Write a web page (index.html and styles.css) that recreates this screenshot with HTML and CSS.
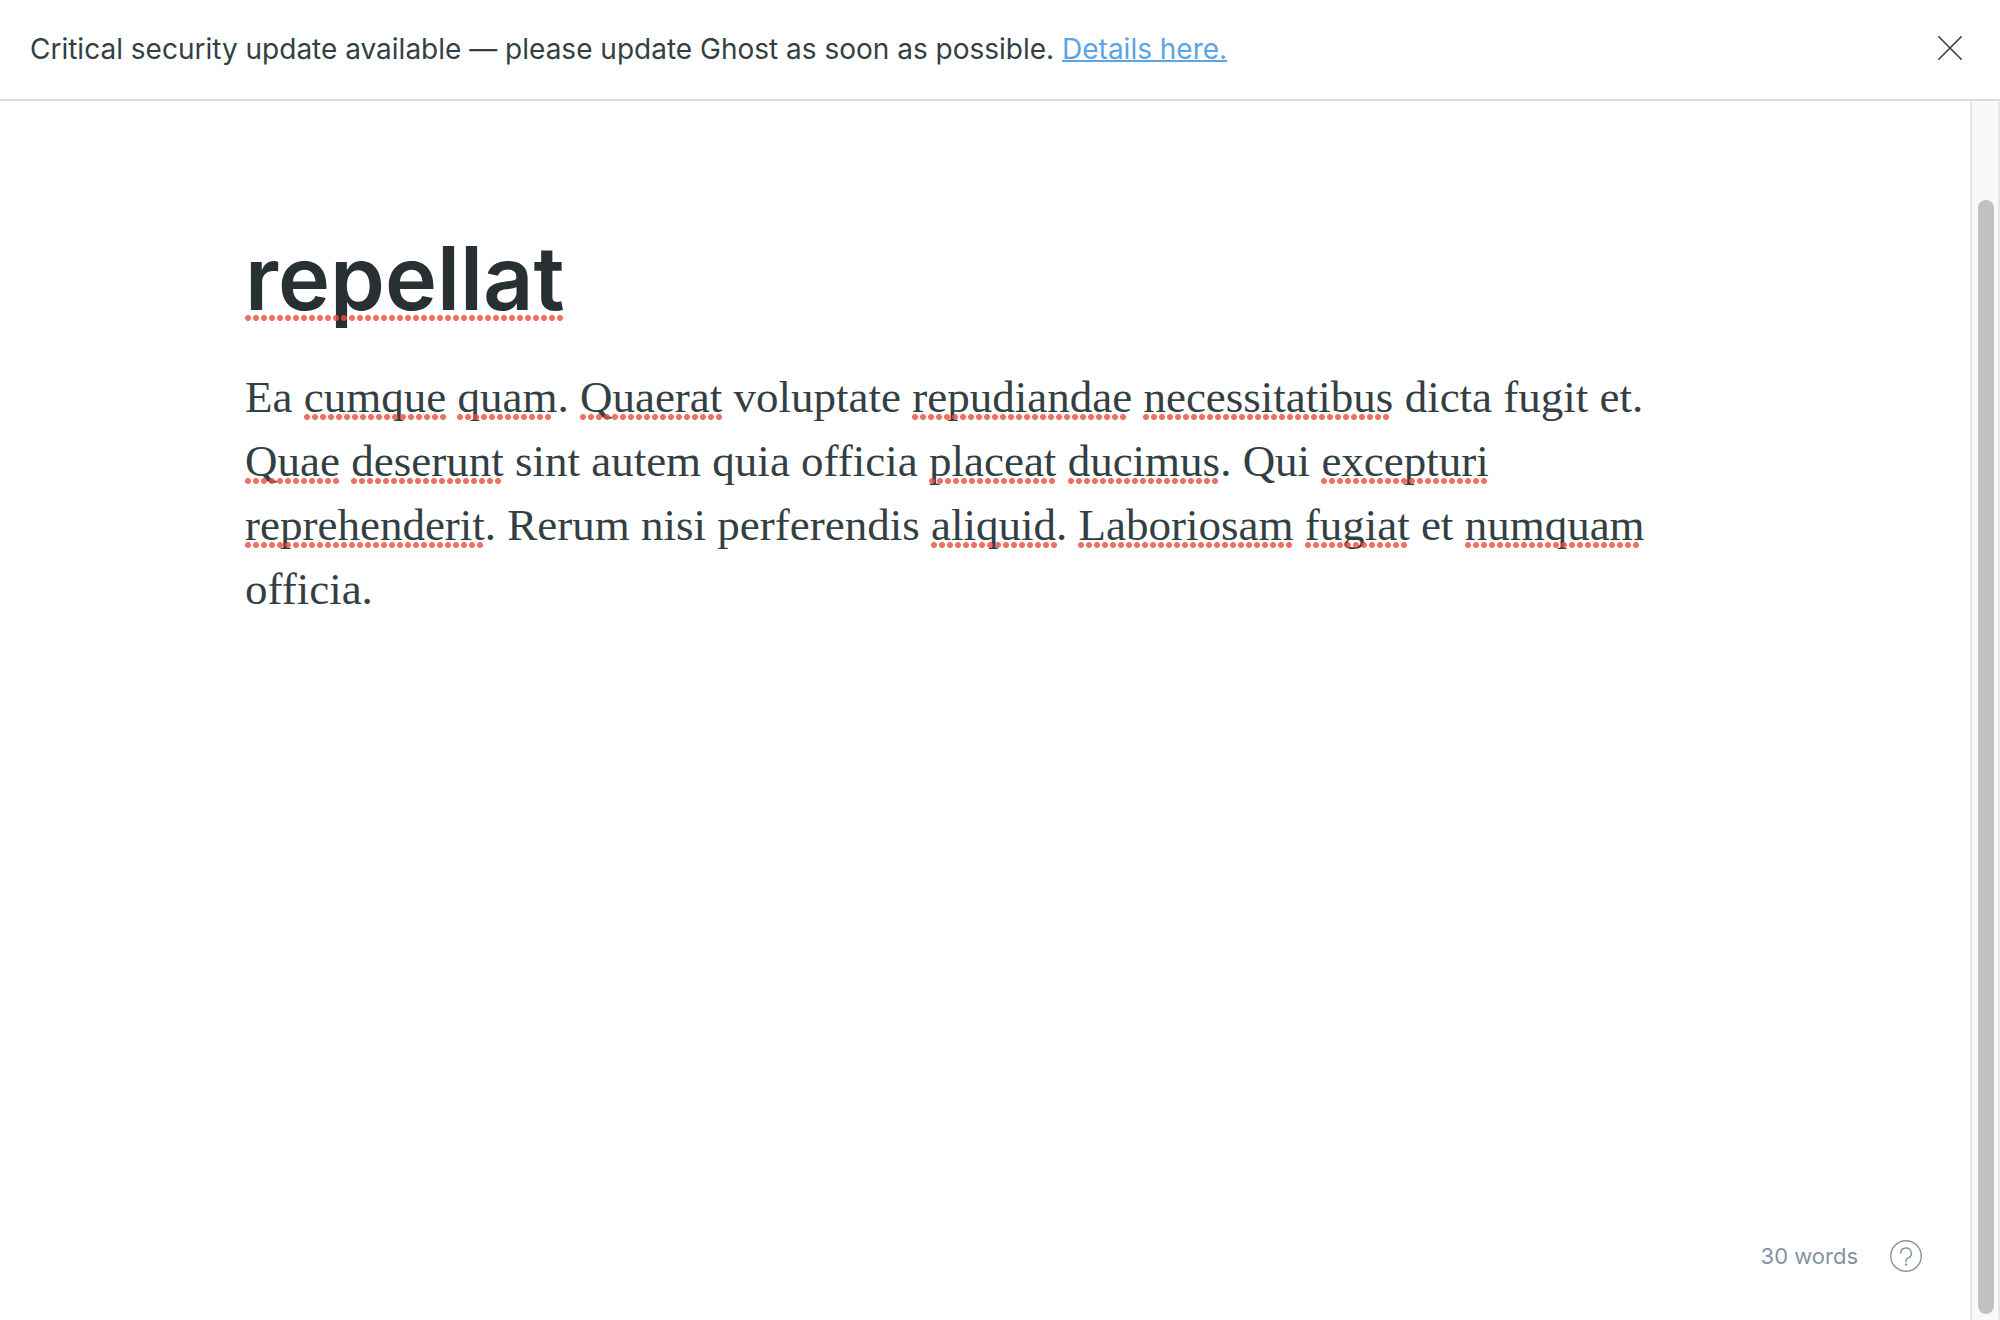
FILE: index.html
```html
<!DOCTYPE html>
<html lang="en">
<head>
<meta charset="utf-8">
<title>repellat - Ghost</title>
<link rel="stylesheet" href="styles.css">
</head>
<body>
<div class="app">
  <aside class="alert">
    <p class="alert-text">Critical security update available — please update Ghost as soon as possible. <a class="alert-link" href="#details">Details here.</a></p>
    <button class="alert-close" type="button" aria-label="Close">
      <svg width="24" height="24" viewBox="0 0 24 24" fill="none" stroke="currentColor" stroke-width="1.6" stroke-linecap="round"><path d="M0.8 0.8 23.2 23.2M23.2 0.8 0.8 23.2"/></svg>
    </button>
  </aside>
  <div class="workspace">
    <main class="editor">
      <article class="post">
        <div class="title misspelled"><input class="title-input" type="text" aria-label="Post title" value="repellat" spellcheck="false"></div>
        <p class="content" contenteditable="true" role="textbox" aria-label="Post content" aria-multiline="true" spellcheck="false">Ea <span class="misspelled">cumque</span> <span class="misspelled">quam</span>. <span class="misspelled">Quaerat</span> voluptate <span class="misspelled">repudiandae</span> <span class="misspelled">necessitatibus</span> dicta fugit et.<br><span class="misspelled">Quae</span> <span class="misspelled">deserunt</span> sint autem quia officia <span class="misspelled">placeat</span> <span class="misspelled">ducimus</span>. Qui <span class="misspelled">excepturi</span><br><span class="misspelled">reprehenderit</span>. Rerum nisi perferendis <span class="misspelled">aliquid</span>. <span class="misspelled">Laboriosam</span> <span class="misspelled">fugiat</span> et <span class="misspelled">numquam</span><br>officia.</p>
      </article>
      <footer class="status">
        <span>30 words</span>
        <button class="help" type="button" aria-label="Help">
          <svg width="32" height="32" viewBox="0 0 32 32" fill="none" stroke="currentColor" stroke-width="1.4" stroke-linecap="round" stroke-linejoin="round"><circle cx="16" cy="16" r="15.3"/><path d="M10.7 13.3a5.3 5.3 0 1 1 7.3 4.9c-1.2.5-2 1.4-2 2.6v.9"/><circle cx="16" cy="24.6" r=".5" fill="currentColor"/></svg>
        </button>
      </footer>
    </main>
    <div class="scrollbar"><div class="scrollbar-thumb"></div></div>
  </div>
</div>
</body>
</html>
```
FILE: styles.css
```css
* {
  box-sizing: border-box;
}

body {
  margin: 0;
  background: #fff;
  color: #343f44;
  font-family: Inter, "Liberation Sans", sans-serif;
}

button {
  display: flex;
  padding: 0;
  border: 0;
  background: none;
  color: inherit;
  cursor: pointer;
}

.app {
  display: flex;
  flex-direction: column;
  min-height: 100vh;
}

.alert {
  display: flex;
  align-items: center;
  justify-content: space-between;
  padding: 32px 38px 32px 30px;
  border-bottom: 2px solid #dadcdb;
}

.alert-text {
  margin: 0;
  font-size: 28px;
  line-height: 35px;
}

.alert-link {
  color: #5ba4e5;
  text-decoration-thickness: 2px;
}

.alert-close {
  padding-bottom: 4px;
}

.workspace {
  display: flex;
  flex: 1;
}

.editor {
  display: flex;
  flex: 1;
  flex-direction: column;
  justify-content: space-between;
}

.post {
  width: 82%;
  padding: 122px 80px 0 0;
  margin-left: 245px;
}

.title {
  display: inline-block;
  height: 110px;
}

.title-input {
  display: block;
  field-sizing: content;
  height: 110px;
  padding: 0;
  border: 0;
  outline: 0;
  background: none;
  color: #283034;
  font: 600 88px/110px Inter, "Liberation Sans", sans-serif;
}

.misspelled {
  position: relative;
}

/* Spelling mark: whole dots only, so the width is a multiple of the 8px tile */
.misspelled::after {
  position: absolute;
  bottom: 2px;
  left: 0;
  width: round(nearest, 100%, 8px);
  height: 6px;
  background: radial-gradient(circle closest-side at 3px 3px, rgb(235 77 61 / 80%) 85%, transparent 115%) 0 0 / 8px 6px repeat-x;
  content: "";
}

.title::after {
  bottom: 12px;
}

.content {
  margin: 32px 0 0;
  outline: 0;
  font-family: Georgia, "Liberation Serif", serif;
  font-size: 45px;
  line-height: 64px;
  white-space: nowrap;
}

.status {
  display: flex;
  align-items: center;
  justify-content: flex-end;
  gap: 32px;
  padding: 0 48px 48px;
  color: #82949f;
  font-size: 22px;
}

.scrollbar {
  display: flex;
  width: 30px;
  padding: 99px 4px 6px 6px;
  border: solid #e6e6e6;
  border-width: 0 2px;
  background: #f9f9f9;
}

.scrollbar-thumb {
  flex: 1;
  border-radius: 8px;
  background: #c1c1c1;
}
```
